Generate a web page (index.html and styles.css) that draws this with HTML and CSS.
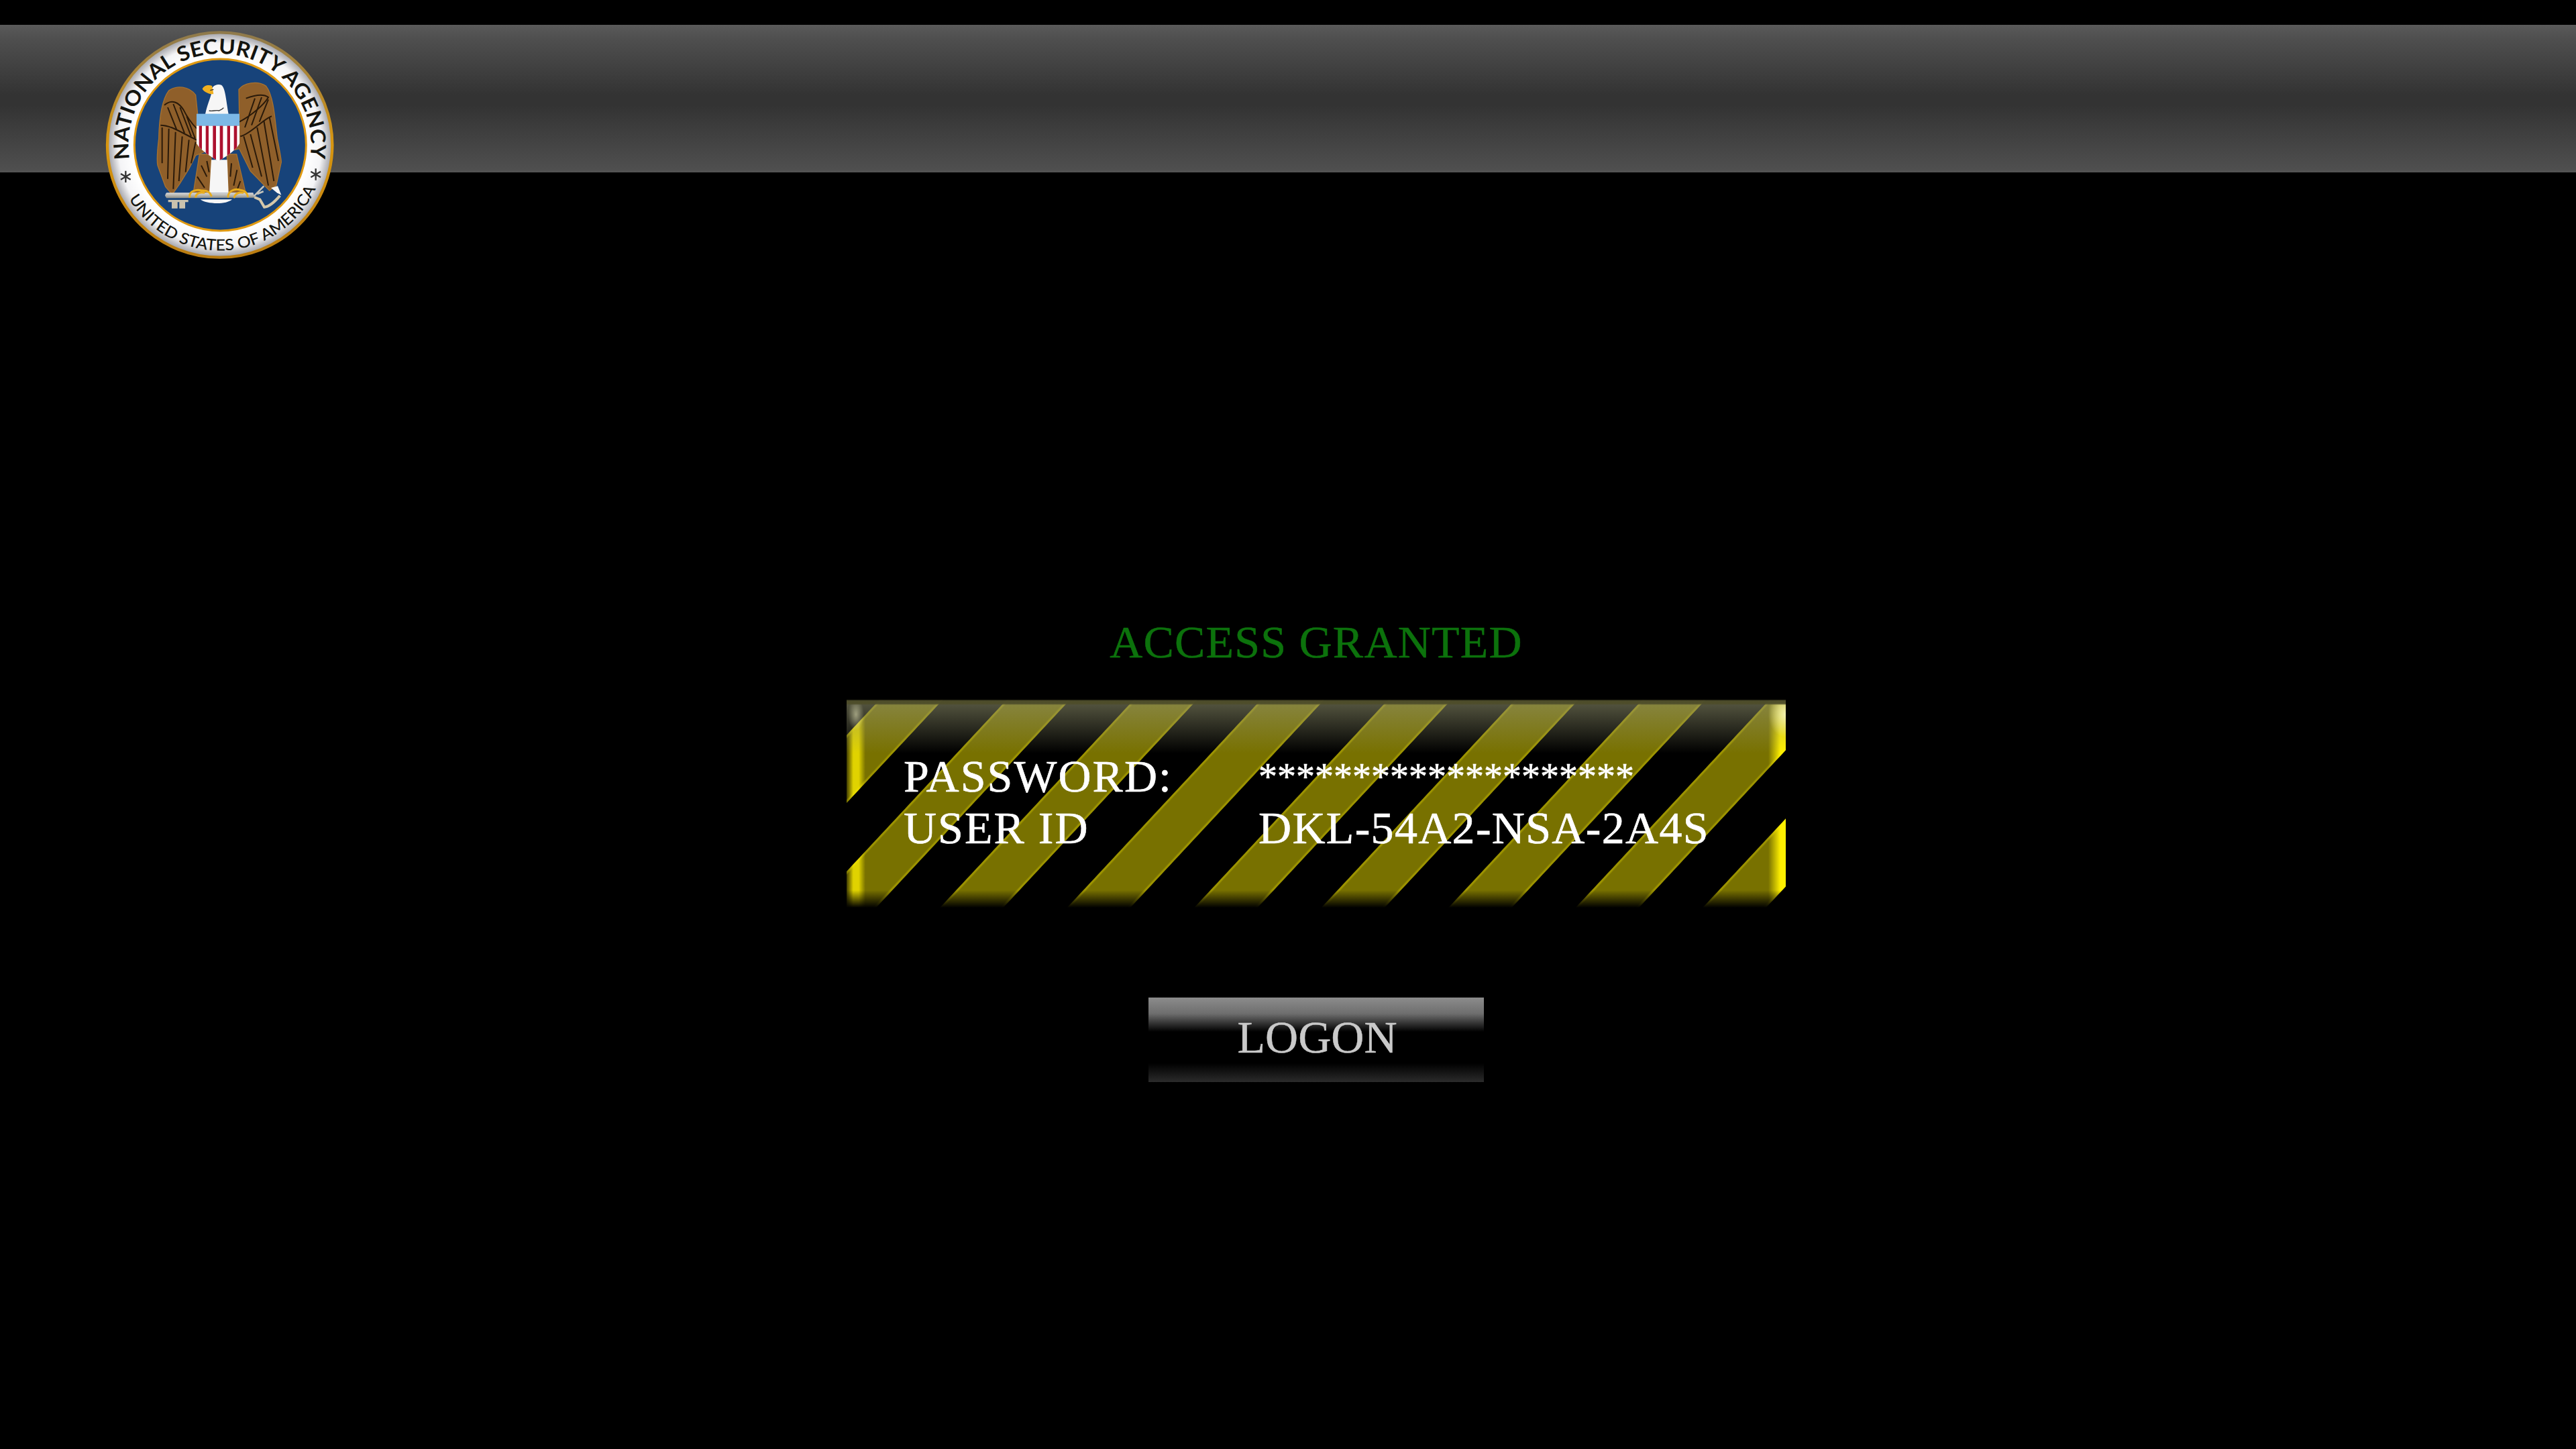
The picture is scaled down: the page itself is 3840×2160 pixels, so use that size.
FILE: index.html
```html
<!DOCTYPE html>
<html lang="en">

<head>
    <meta charset="UTF-8">
    <title>National Security Agency - Logon</title>
    <link rel="stylesheet" href="styles.css">
</head>

<body>
    <header class="top-bar">
        <svg class="seal" viewBox="150 120 1080 1080" aria-label="National Security Agency seal">
            <defs>
                <radialGradient id="ring" gradientUnits="userSpaceOnUse" cx="683" cy="648" r="505">
                    <stop offset="0.78" stop-color="#fff" />
                    <stop offset="0.9" stop-color="#f4f4f6" />
                    <stop offset="1" stop-color="#9a9aa0" />
                </radialGradient>
                <linearGradient id="rim" x1="0" y1="0" x2="0" y2="1">
                    <stop offset="0" stop-color="#8f7a4c" />
                    <stop offset="0.5" stop-color="#d8960f" />
                    <stop offset="1" stop-color="#b97c12" />
                </linearGradient>
                <linearGradient id="keybar" x1="0" y1="0" x2="0" y2="1">
                    <stop offset="0" stop-color="#dcdcdc" />
                    <stop offset="1" stop-color="#8d8d85" />
                </linearGradient>
                <path id="arc-top" d="M 280 712 A 408 408 0 1 1 1086 712" />
                <path id="arc-bottom" d="M 276 888 A 472 472 0 0 0 1110 849" />
                <clipPath id="shield-clip">
                    <path d="M578 508H772V640C760 668 715 700 676 720C640 700 592 668 578 640Z" />
                </clipPath>
            </defs>

            <circle cx="683" cy="648" r="503" fill="url(#ring)" stroke="url(#rim)" stroke-width="13" />
            <circle cx="685" cy="648" r="384" fill="#17437a" stroke="#e09a12" stroke-width="9" />

            <text class="seal-text seal-text-top">
                <textPath href="#arc-top" textLength="1405" lengthAdjust="spacingAndGlyphs">NATIONAL SECURITY AGENCY</textPath>
            </text>
            <text class="seal-text seal-text-bottom">
                <textPath href="#arc-bottom" textLength="1030" lengthAdjust="spacingAndGlyphs">UNITED STATES OF AMERICA</textPath>
            </text>

            <g class="seal-star">
                <path d="M262 764V816M240 777L284 803M284 777L240 803" />
                <path d="M1112 754V806M1090 767L1134 793M1134 767L1090 793" />
            </g>

            <!-- wings -->
            <path class="wing" d="M575 425C545 385 490 380 455 405C425 445 412 530 410 620C404 670 400 715 405 740L440 835L470 870L505 820L545 755L575 695L612 680L585 520Z" />
            <path class="wing" d="M768 400C790 372 850 358 890 385C925 430 930 540 940 620C950 670 958 710 958 725L935 830L905 852L820 765L770 665L750 670L770 510Z" />
            <g class="feather">
                <path d="M435 470C470 440 500 460 520 490C540 530 565 560 580 575" />
                <path d="M418 560C470 560 520 600 585 628" />
                <path d="M450 480L490 580M475 465L525 595M505 480L555 610M535 520L572 618" />
                <path d="M425 570L425 730M455 575L450 800M485 590L475 845M515 610L500 810M545 625L530 770M575 635L555 730" />
                <path d="M800 440C840 425 880 420 900 435C880 470 820 520 770 545" />
                <path d="M775 610C820 600 880 530 915 520" />
                <path d="M840 440L795 570M870 435L825 560M900 445L860 545" />
                <path d="M790 610L830 750M820 600L870 790M850 570L900 830M880 540L925 810M905 525L945 720" />
            </g>

            <!-- legs and tail -->
            <path class="wing" d="M592 690H645L640 860H565Z" />
            <path class="wing" d="M715 690H758L798 860H720Z" />
            <g class="feather">
                <path d="M600 740L625 790M582 790L615 840M625 720L635 770" />
                <path d="M735 730L730 790M760 760L745 830M775 810L760 850" />
            </g>
            <path class="white" d="M645 715H716L722 862H636Z" />

            <!-- head and neck -->
            <path class="white" d="M618 510C626 470 640 440 646 416C640 390 665 372 690 380C708 395 710 440 722 510Z" />
            <path class="beak" d="M605 398C612 382 632 378 648 384L655 420C640 424 614 412 605 398Z" />
            <path class="feather-thin" d="M640 404L655 400M635 495C650 500 665 490 680 495C690 490 695 488 700 482" />

            <!-- shield -->
            <g clip-path="url(#shield-clip)">
                <rect x="578" y="562" width="194" height="160" fill="#fff" />
                <rect x="590" y="562" width="13" height="160" fill="#ad1230" />
                <rect x="620" y="562" width="13" height="160" fill="#ad1230" />
                <rect x="652" y="562" width="14" height="160" fill="#ad1230" />
                <rect x="683" y="562" width="14" height="160" fill="#ad1230" />
                <rect x="716" y="562" width="13" height="160" fill="#ad1230" />
                <rect x="746" y="562" width="14" height="160" fill="#ad1230" />
                <rect x="578" y="508" width="194" height="54" fill="#7cb8e6" />
            </g>

            <!-- key -->
            <path class="white" d="M596 892C620 912 710 918 738 892Z" />
            <path fill="url(#keybar)" d="M445 862H832L840 884L445 886Q432 874 445 862Z" />
            <path fill="#c9c2ae" d="M452 894H542V904H528V932H502V904H494V932H468V904H452Z" />
            <path class="key-stem" d="M835 878L880 832M850 868L878 856" />
            <path class="key-bow" d="M838 882L862 892L882 926C905 925 935 895 952 875" />
            <path class="white" d="M912 840L942 832L958 872L938 862Z" />

            <!-- talons -->
            <path class="talon" d="M548 880C545 855 580 845 600 852C625 850 640 860 645 875M575 880C578 865 595 858 612 862" />
            <path class="talon" d="M720 880C720 855 750 840 775 850C795 852 805 865 808 878M748 882C752 865 770 858 786 862" />
        </svg>
    </header>

    <main class="logon">
        <h1 class="status">ACCESS GRANTED</h1>
        <div class="hazard">
            <span class="field-label">PASSWORD:</span>
            <span class="field-mask">********************</span>
            <span class="field-label">USER ID</span>
            <span class="field-value">DKL-54A2-NSA-2A4S</span>
        </div>
        <button class="logon-btn">LOGON</button>
    </main>
</body>

</html>
```

FILE: styles.css
```css
* {
    margin: 0;
    padding: 0;
    box-sizing: border-box;
}

body {
    background-color: #000;
    font-family: "Liberation Serif", serif;
    min-height: 100vh;
    padding-top: 37px;
}

.top-bar {
    height: 220px;
    position: relative;
    background: linear-gradient(180deg, #5a5a5a 0, #4f4f4f 20px, #333 104px, #333 120px, #4f4f4f 216px, #555 220px);
}

.seal {
    position: absolute;
    left: 150px;
    top: 3px;
    width: 360px;
    height: 360px;
}

.seal-text {
    font-family: Lato, sans-serif;
    fill: #14140f;
}

.seal-text-top {
    font-size: 92px;
    font-weight: 700;
}

.seal-text-bottom {
    font-size: 70px;
    font-weight: 500;
}

.seal-star {
    fill: none;
    stroke: #333;
    stroke-width: 7;
}

.wing {
    fill: #8f5f2a;
    stroke: #a8722f;
    stroke-width: 4;
}

.feather {
    fill: none;
    stroke: #2a1a0a;
    stroke-width: 6;
}

.feather-thin {
    fill: none;
    stroke: #333;
    stroke-width: 4;
}

.white {
    fill: #f6f6f6;
}

.beak {
    fill: #f0b020;
}

.key-stem {
    fill: none;
    stroke: #c4c4bc;
    stroke-width: 8;
}

.key-bow {
    fill: none;
    stroke: #d5c8aa;
    stroke-width: 12;
}

.talon {
    fill: none;
    stroke: #e8ad1c;
    stroke-width: 9;
    stroke-linecap: round;
}

.logon {
    display: flex;
    flex-direction: column;
    align-items: center;
    padding: 662px 0 0 84px;
}

.status {
    color: #0c720c;
    font-size: 68px;
    font-weight: 400;
    line-height: 77px;
    letter-spacing: 1.2px;
    -webkit-text-stroke: .5px #0c720c;
}

.hazard {
    width: 1400px;
    height: 310px;
    margin-top: 47px;
    padding: 76px 0 0 85px;
    display: grid;
    grid-template-columns: 529px 1fr;
    grid-auto-rows: 77px;
    color: #fff;
    font-size: 68px;
    line-height: 77px;
    -webkit-text-stroke: .6px #fff;
    background:
        linear-gradient(180deg, rgba(30, 30, 15, .95) 0, rgba(78, 77, 42, .97) 2px, rgba(78, 77, 42, .97) 6px, transparent 8px),
        radial-gradient(ellipse 26px 34px at 100% 22px, rgba(255, 255, 220, .75), transparent),
        radial-gradient(ellipse 12px 24px at 14px 22px, rgba(235, 235, 190, .55), transparent),
        linear-gradient(180deg, rgba(146, 147, 110, .55) 8px, transparent 80px),
        linear-gradient(0deg, #000 0, transparent 26px),
        repeating-linear-gradient(133deg, transparent 0, transparent 35.5px, rgba(255, 240, 0, .28) 36.5px, rgba(255, 240, 0, .28) 38px, transparent 40px, transparent 101px, rgba(255, 240, 0, .28) 103px, rgba(255, 240, 0, .28) 104.5px, transparent 105.5px, transparent 138.6px),
        linear-gradient(90deg, rgba(0, 0, 0, .75) 0, rgba(0, 0, 0, .12) 10px, rgba(0, 0, 0, .12) 18px, rgba(0, 0, 0, .53) 28px, rgba(0, 0, 0, .53) calc(100% - 26px), transparent calc(100% - 8px)),
        repeating-linear-gradient(133deg, transparent 0, transparent 35.5px, #fff000 36.5px, #fff000 104.5px, transparent 105.5px, transparent 138.6px);
}

.field-label {
    letter-spacing: 2px;
}

.field-mask {
    font-size: 56px;
    line-height: 78px;
}

.field-value {
    letter-spacing: 1.3px;
}

.logon-btn {
    width: 500px;
    height: 126px;
    margin-top: 134px;
    padding: 0 0 7px 3px;
    border: none;
    color: #c9c9c9;
    font-family: "Liberation Serif", serif;
    font-size: 68px;
    -webkit-text-stroke: .5px #c9c9c9;
    background: linear-gradient(180deg, #8c8c8c 0, #6e6e6e 24px, #000 51px, #000 98px, #2b2b2b 126px);
}
```
